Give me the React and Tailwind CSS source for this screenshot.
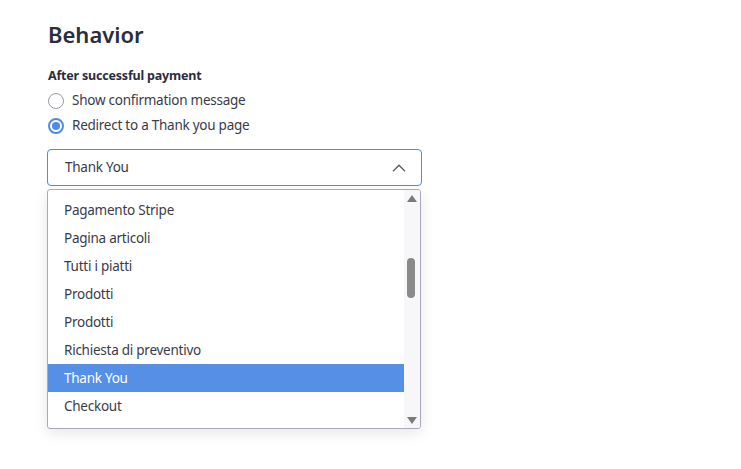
const PAGES = [
  "Pagamento Stripe",
  "Pagina articoli",
  "Tutti i piatti",
  "Prodotti",
  "Prodotti",
  "Richiesta di preventivo",
  "Thank You",
  "Checkout"
];

function Radio({ checked, label }) {
  return (
    <label className="flex h-[25px] items-center gap-2">
      <span
        className={[
          "flex h-4 w-4 items-center justify-center rounded-full border bg-white",
          checked ? "border-[#4f8be6] border-2" : "border-[#9a9aa8]"
        ].join(" ")}
      >
        {checked && <span className="h-2 w-2 rounded-full bg-[#4f8be6]" />}
      </span>
      <span className="text-[13.5px] tracking-[-0.25px] text-[#3a3b4a]">{label}</span>
    </label>
  );
}

export default function App() {
  return (
    <div
      className="min-h-[469px] bg-white px-12 pt-[19px] text-[#2b2d3e]"
      style={{ fontFamily: '"Noto Sans", "Open Sans", sans-serif' }}
    >
      <h2 className="text-[22px] font-semibold leading-[30px]">Behavior</h2>

      <p className="mt-[18px] text-[12.5px] font-bold leading-[18px] tracking-[-0.2px]">After successful payment</p>
      <div className="mt-[3px] flex flex-col">
        <Radio label="Show confirmation message" />
        <Radio checked label="Redirect to a Thank you page" />
      </div>

      <div className="relative -ml-px mt-[11px] w-[375px]">
        <div className="flex h-[37px] items-center justify-between rounded-[4px] border-[1.5px] border-[#4f8be6] pl-[17px] pr-[15px]">
          <span className="text-[13.5px] tracking-[-0.25px] text-[#3a3b4a]">Thank You</span>
          <svg width="14" height="8" viewBox="0 0 14 8" fill="none" stroke="#5a5b66" strokeWidth="1.3">
            <path d="M1 7.2 7 1.2l6 6" />
          </svg>
        </div>

        <div className="absolute left-0 top-[40px] flex h-[240px] w-[374px] overflow-hidden rounded-[3px] border border-[#a9a9bd] bg-white shadow-[0_4px_14px_rgba(0,0,0,0.10)]">
          <ul className="flex-1 pt-[6px]">
            {PAGES.map((page, i) => (
              <li
                key={i}
                className={[
                  "flex h-[28px] items-center pl-[16px] text-[13.5px] tracking-[-0.25px]",
                  i === 6 ? "bg-[#5590e6] text-white" : "text-[#3a3b4a]"
                ].join(" ")}
              >
                {page}
              </li>
            ))}
          </ul>
          <div className="relative w-[16px] bg-[#f7f7f9]">
            <svg className="absolute left-[3px] top-[5px]" width="10" height="7" viewBox="0 0 10 7">
              <path d="M5 0 10 7H0z" fill="#7a7a7a" />
            </svg>
            <div className="absolute left-[3px] top-[68px] h-[40px] w-[8px] rounded-full bg-[#8a8a8a]" />
            <svg className="absolute bottom-[4px] left-[3px]" width="10" height="7" viewBox="0 0 10 7">
              <path d="M0 0h10L5 7z" fill="#7a7a7a" />
            </svg>
          </div>
        </div>
      </div>
    </div>
  );
}
